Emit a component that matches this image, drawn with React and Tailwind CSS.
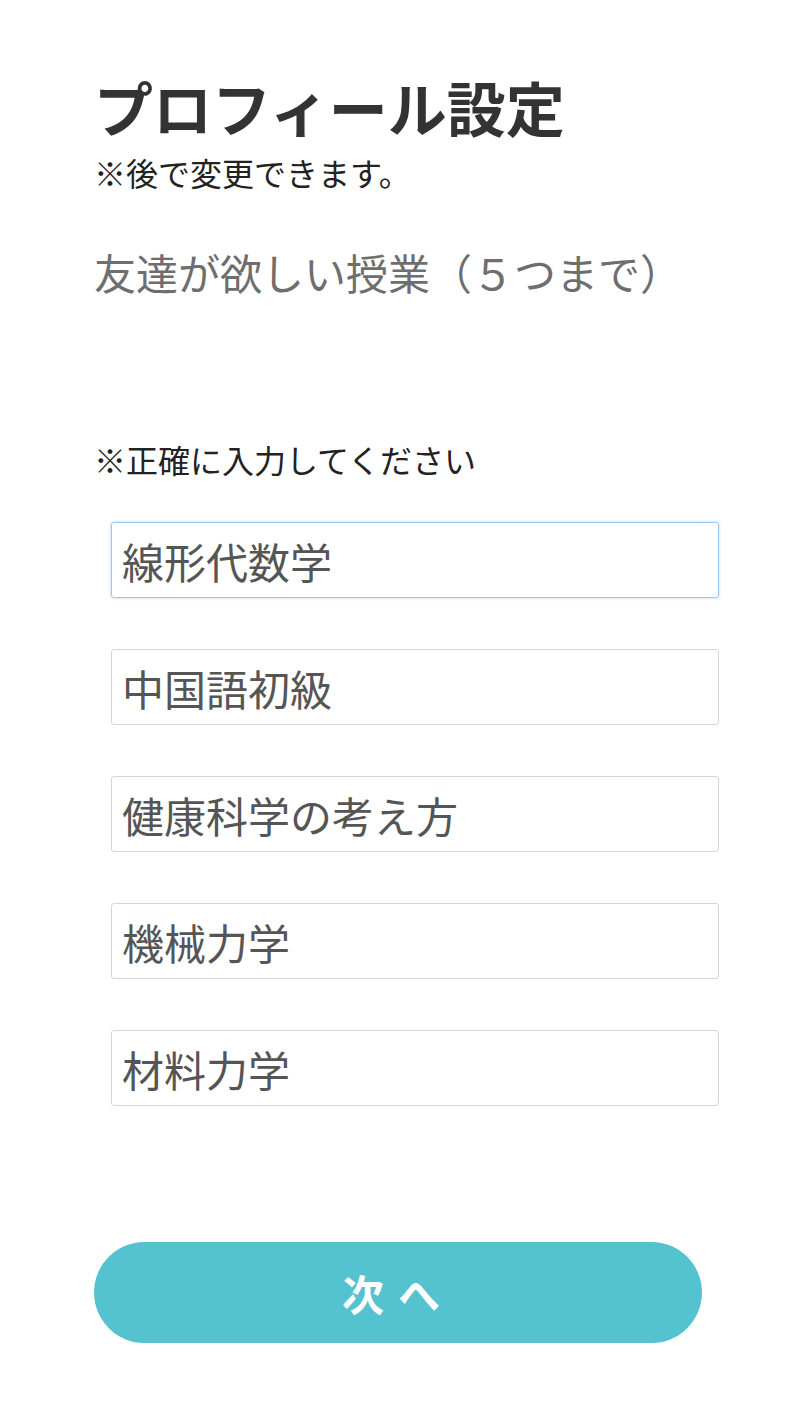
import React, { useState } from 'react';

const FONT = { fontFamily: '"Noto Sans CJK JP", "Noto Sans", sans-serif' };

const INITIAL = ['線形代数学', '中国語初級', '健康科学の考え方', '機械力学', '材料力学'];

export default function App() {
  const [classes, setClasses] = useState(INITIAL);

  const update = (i, v) => {
    const next = [...classes];
    next[i] = v;
    setClasses(next);
  };

  return (
    <div className="min-h-screen bg-white px-[94px] pt-[74px]" style={FONT}>
      {/* header */}
      <h1 className="text-[59px] leading-[66px] font-bold text-[#333333]">プロフィール設定</h1>
      <p className="mt-[16px] text-[32px] leading-[32px] text-[#222222]">※後で変更できます。</p>

      <h2 className="mt-[58px] text-[42px] leading-[52px] text-[#6e6e6e]">友達が欲しい授業（５つまで）</h2>

      <p className="mt-[143px] text-[32px] leading-[36px] text-[#222222]">※正確に入力してください</p>

      {/* class inputs */}
      <div className="mt-[45px] ml-[17px] flex flex-col gap-[51px]">
        {classes.map((c, i) => (
          <input
            key={i}
            value={c}
            onChange={(e) => update(i, e.target.value)}
            autoFocus={i === 0}
            className={`h-[76px] w-[608px] rounded-[3px] border pl-[10px] text-[42px] text-[#555555] outline-none ${
              i === 0 ? 'border-[#9cc7f2] shadow-[0_0_3px_rgba(100,160,230,0.5)]' : 'border-[#d6d6d6]'
            }`}
            style={FONT}
          />
        ))}
      </div>

      <button
        className="mt-[136px] mb-[66px] flex h-[101px] w-[608px] items-center justify-center gap-[14px] rounded-full bg-[#55c2cf] pr-[14px] text-[42px] font-bold text-white"
        style={FONT}
      >
        <span>次</span>
        <span>へ</span>
      </button>
    </div>
  );
}
